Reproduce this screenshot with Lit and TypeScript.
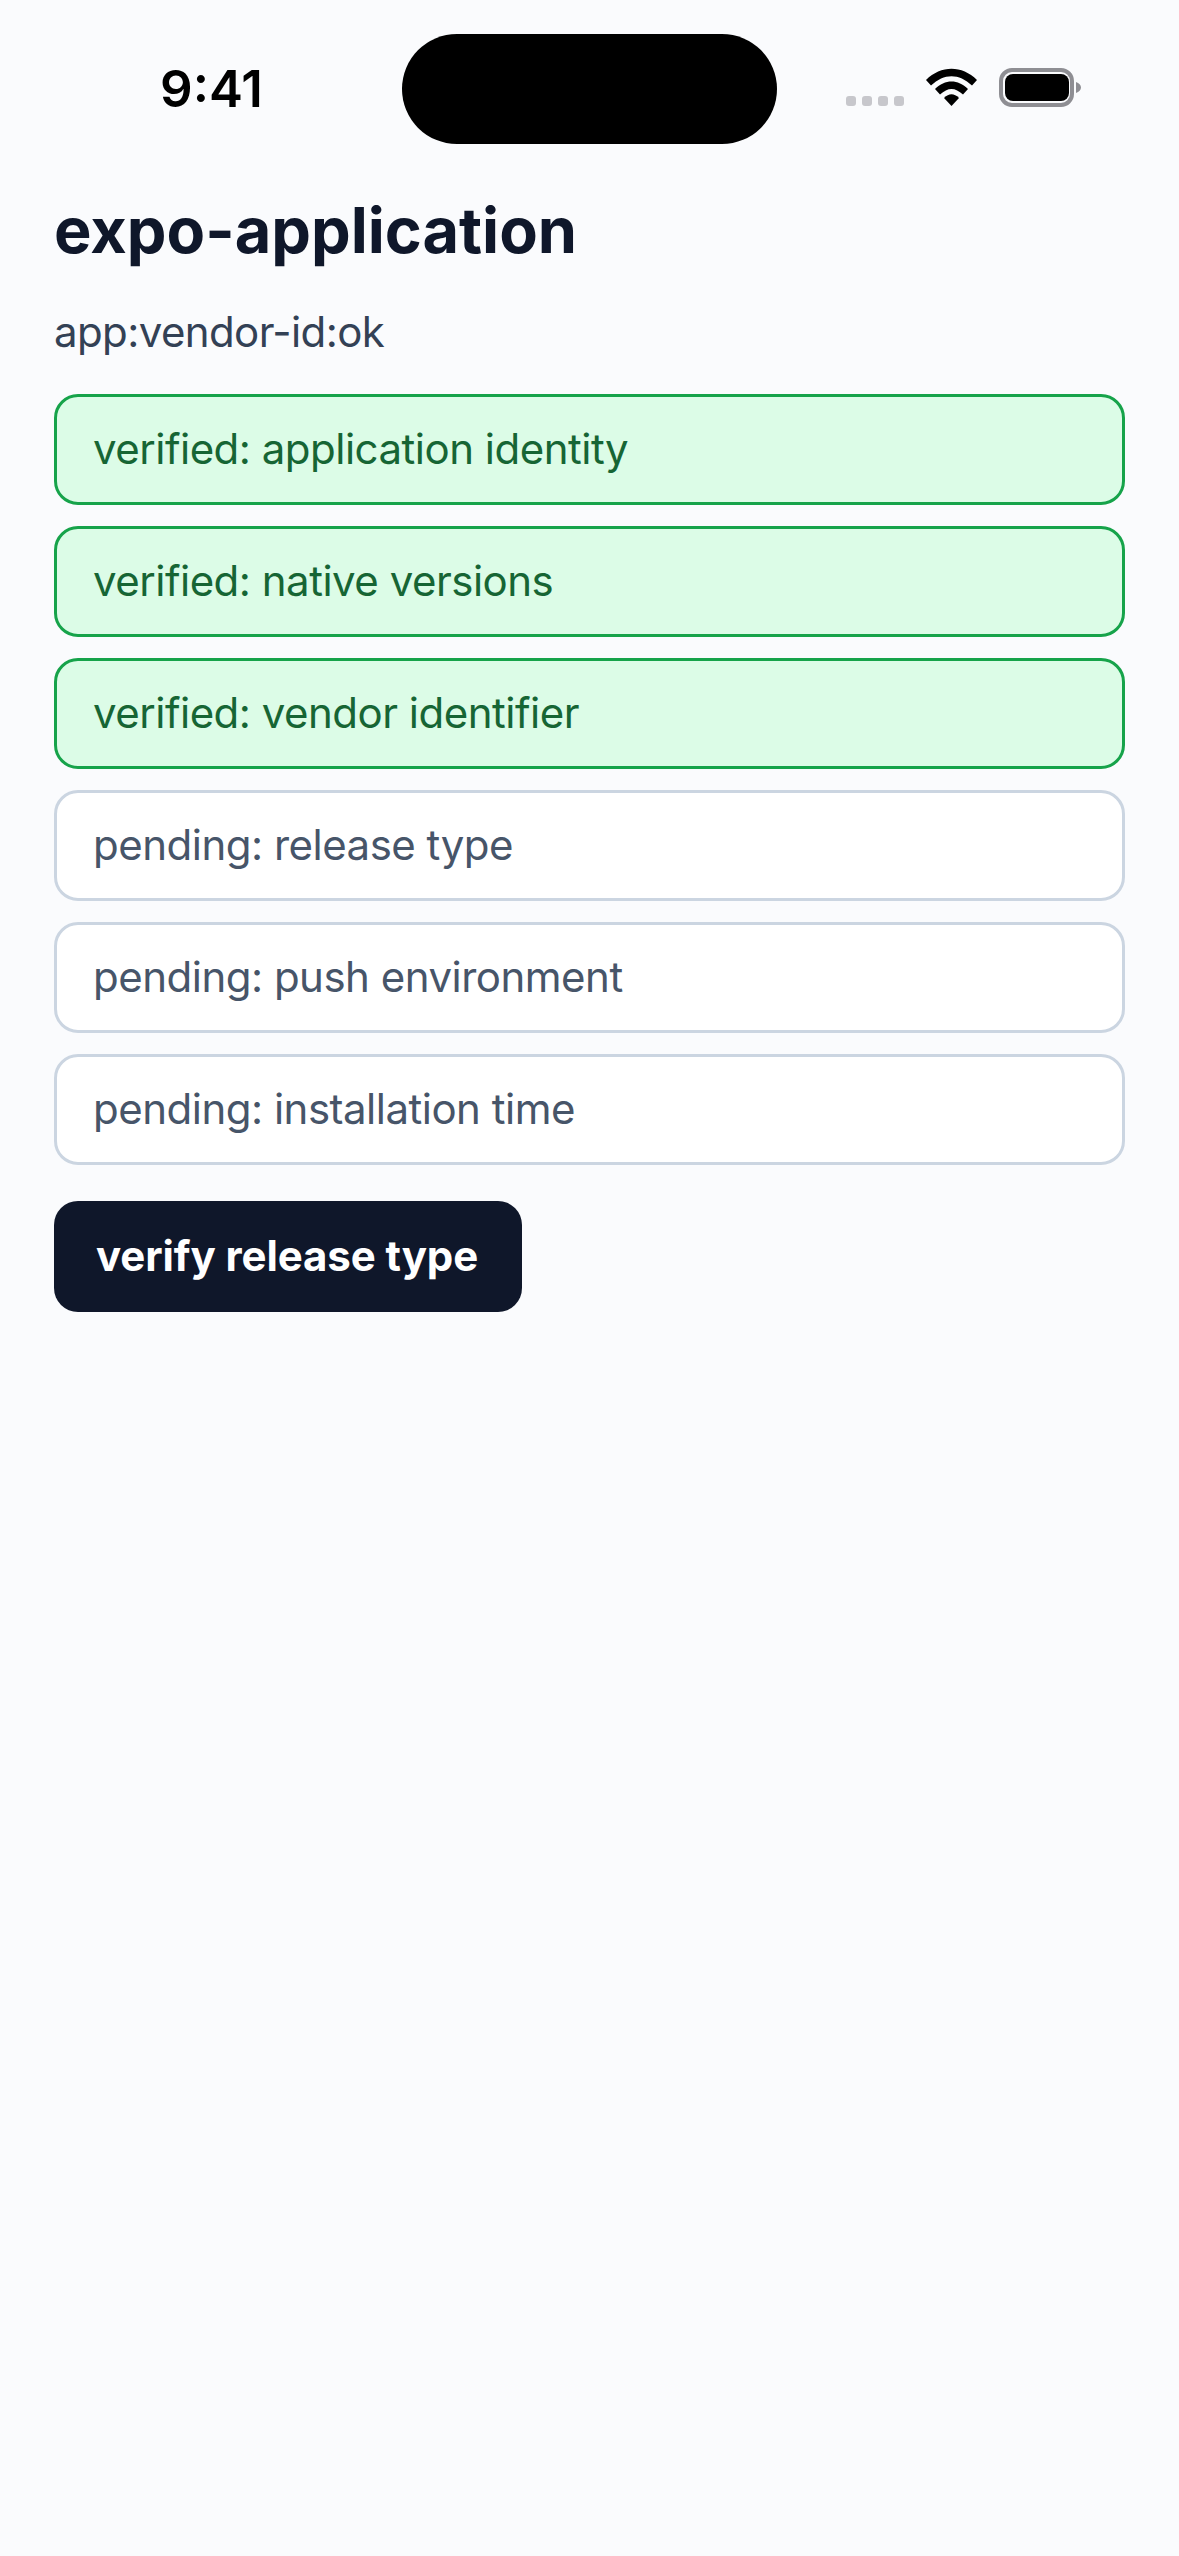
import { LitElement, html, css } from "lit";
import { customElement } from "lit/decorators.js";

const rows = [
  ["verified: application identity", true],
  ["verified: native versions", true],
  ["verified: vendor identifier", true],
  ["pending: release type", false],
  ["pending: push environment", false],
  ["pending: installation time", false],
] as const;

@customElement("app-root")
export class AppRoot extends LitElement {
  static styles = css`
    :host {
      display: block;
      width: 1179px;
      height: 2556px;
      background: #fafbfd;
      font-family: Inter, "Liberation Sans", sans-serif;
      overflow: hidden;
    }
    .status {
      display: flex;
      align-items: flex-start;
      height: 190px;
      box-sizing: border-box;
      padding-top: 34px;
    }
    .time-wrap {
      width: 402px;
      display: flex;
      justify-content: center;
      padding: 25px 0 0 21px;
      box-sizing: border-box;
    }
    .time {
      font-size: 51px;
      line-height: 60px;
      font-weight: 600;
      color: #000;
    }
    .island {
      width: 375px;
      height: 110px;
      border-radius: 55px;
      background: #000;
    }
    .icons {
      display: block;
      margin: 34px 0 0 69px;
    }
    main {
      padding: 0 54px;
      display: flex;
      flex-direction: column;
      align-items: stretch;
    }
    h1 {
      margin: 0;
      font-size: 63px;
      line-height: 81px;
      font-weight: 700;
      color: #0f172a;
    }
    .sub {
      margin: 31px 0 0;
      font-size: 42px;
      line-height: 60px;
      letter-spacing: -0.6px;
      color: #334155;
    }
    .list {
      display: flex;
      flex-direction: column;
      gap: 21px;
      margin-top: 32px;
    }
    .row {
      box-sizing: border-box;
      height: 111px;
      border: 3px solid #cbd5e1;
      border-radius: 24px;
      background: #fff;
      color: #475569;
      padding: 0 36px 2px;
      display: flex;
      align-items: center;
      font-size: 42px;
      letter-spacing: -0.5px;
    }
    .row.ok {
      background: #dcfce7;
      border-color: #16a34a;
      color: #166534;
    }
    button {
      align-self: flex-start;
      margin-top: 36px;
      height: 111px;
      padding: 0 44px 2px 42px;
      border: 0;
      border-radius: 24px;
      background: #0f172a;
      color: #fff;
      font: 700 42px Inter, "Liberation Sans", sans-serif;
      letter-spacing: -0.1px;
    }
  `;

  render() {
    return html`
      <div class="status">
        <div class="time-wrap"><span class="time">9:41</span></div>
        <div class="island"></div>
        <svg class="icons" width="240" height="44" viewBox="846 68 240 44">
          <g fill="#c7c7cc">
            <rect x="846" y="96" width="10" height="10" rx="3" />
            <rect x="862" y="96" width="10" height="10" rx="3" />
            <rect x="878" y="96" width="10" height="10" rx="3" />
            <rect x="894" y="96" width="10" height="10" rx="3" />
          </g>
          <g fill="#000">
            <path d="M926 80 C941 65 962 65 977 80 L972 85.500 C959 73 944 73 931 85.500 Z" />
            <path d="M935 89 C945 79 958 79 968 89 L963 94.500 C955 87 948 87 940 94.500 Z" />
            <path d="M944 98 C949 93 954 93 959 98 L951.500 106 Z" />
          </g>
          <rect x="1001" y="70" width="71" height="35" rx="11" fill="none" stroke="#8e8e93" stroke-width="4" />
          <rect x="1005" y="74" width="64" height="27" rx="8" fill="#000" />
          <path d="M1076 82 C1079 83 1081 85 1081 87.500 C1081 90 1079 92 1076 93 Z" fill="#8e8e93" />
        </svg>
      </div>
      <main>
        <h1>expo-application</h1>
        <p class="sub">app:vendor-id:ok</p>
        <div class="list">
          ${rows.map(([t, ok]) => html`<div class="row ${ok ? "ok" : ""}">${t}</div>`)}
        </div>
        <button>verify release type</button>
      </main>
    `;
  }
}
